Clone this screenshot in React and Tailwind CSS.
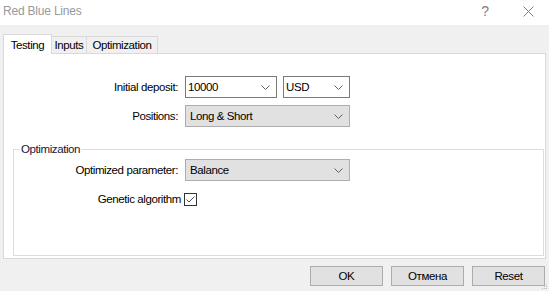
import React from "react";

const font = { fontFamily: '"Liberation Sans", Arial, sans-serif' };

function Chevron() {
  return (
    <svg width="9" height="5" viewBox="0 0 9 5" className="shrink-0">
      <path d="M0.5 0.5 L4.5 4.5 L8.5 0.5" fill="none" stroke="#606060" strokeWidth="1" />
    </svg>
  );
}

function EditCombo({ value, w }) {
  return (
    <div className={`${w} h-[22px] bg-white border border-[#7a7a7a] flex items-center justify-between pl-[2px] pr-[6px]`}>
      <span className="text-black">{value}</span>
      <Chevron />
    </div>
  );
}

function ListCombo({ value, w }) {
  return (
    <div className={`${w} h-[22px] bg-[#e1e1e1] border border-[#adadad] flex items-center justify-between pl-[4px] pr-[6px]`}>
      <span className="text-black">{value}</span>
      <Chevron />
    </div>
  );
}

function Btn({ children }) {
  return (
    <div className="w-[73px] h-[20px] bg-[#e1e1e1] border border-[#adadad] flex items-center justify-center text-black">
      {children}
    </div>
  );
}

export default function App() {
  return (
    <div
      className="relative w-[549px] h-[291px] bg-[#f0f0f0] flex flex-col overflow-hidden text-[11.5px] leading-[14px] tracking-[-0.4px]"
      style={font}
    >
      {/* title bar */}
      <div className="h-[25px] bg-white flex items-center shrink-0">
        <span className="pl-[3px] text-[12px] tracking-[-0.2px] text-[#999999] -mt-[3px]">Red Blue Lines</span>
        <div className="ml-auto flex items-center -mt-[3px]">
          <span className="text-[14px] text-[#808080] w-[10px] text-center mr-[33px]">?</span>
          <svg width="11" height="11" viewBox="0 0 11 11" className="mr-[15px]">
            <path d="M0.5 0.5 L10.5 10.5 M10.5 0.5 L0.5 10.5" stroke="#808080" strokeWidth="1" />
          </svg>
        </div>
      </div>

      {/* tabs */}
      <div className="flex items-end pl-[3px] pt-[8px] h-[28px] shrink-0">
        <div className="relative z-10 w-[49px] h-[20px] -mb-px bg-white border border-[#d9d9d9] border-b-0 flex justify-center items-start pt-[3px] text-black">
          Testing
        </div>
        <div className="w-[35px] h-[17px] bg-[#f0f0f0] border border-[#d9d9d9] border-l-0 border-b-0 flex justify-center items-center text-black">
          Inputs
        </div>
        <div className="w-[71px] h-[17px] bg-[#f0f0f0] border border-[#d9d9d9] border-l-0 border-b-0 flex justify-center items-center text-black">
          Optimization
        </div>
      </div>

      {/* panel */}
      <div className="mx-[3px] h-[206px] shrink-0 bg-white border border-[#d9d9d9] flex flex-col">
        <div className="flex items-center mt-[22px]">
          <div className="w-[181px] pr-[7px] text-right text-black">Initial deposit:</div>
          <EditCombo value="10000" w="w-[92px]" />
          <div className="w-[6px]" />
          <EditCombo value="USD" w="w-[67px]" />
        </div>
        <div className="flex items-center mt-[7px]">
          <div className="w-[181px] pr-[7px] text-right text-black">Positions:</div>
          <ListCombo value="Long & Short" w="w-[165px]" />
        </div>

        <fieldset className="ml-[9px] mr-[1px] mt-[15px] h-[114px] border border-[#dcdcdc] flex flex-col">
          <legend className="ml-[6px] px-[1px] text-[#14143c]">Optimization</legend>
          <div className="flex items-center mt-[3px]">
            <div className="w-[171px] pr-[7px] text-right text-black">Optimized parameter:</div>
            <ListCombo value="Balance" w="w-[165px]" />
          </div>
          <div className="flex items-center mt-[11px]">
            <div className="w-[170px] pr-[3px] text-right text-black">Genetic algorithm</div>
            <div className="w-[13px] h-[13px] border border-[#333333] bg-white flex items-center justify-center">
              <svg width="11" height="11" viewBox="0 0 11 11">
                <path d="M1.5 5.5 L4 8 L9.5 2.5" fill="none" stroke="#505050" strokeWidth="1" />
              </svg>
            </div>
          </div>
        </fieldset>
      </div>

      {/* buttons */}
      <div className="flex justify-end gap-[8px] pr-[4px] mt-[7px]">
        <Btn>OK</Btn>
        <Btn>Отмена</Btn>
        <Btn>Reset</Btn>
      </div>

      {/* resize grip */}
      <svg width="6" height="6" viewBox="0 0 6 6" className="absolute right-[1px] bottom-[1px]">
        <rect x="4" y="0" width="1" height="1" fill="#b8b8b8" />
        <rect x="2" y="2" width="1" height="1" fill="#b8b8b8" />
        <rect x="4" y="2" width="1" height="1" fill="#b8b8b8" />
        <rect x="0" y="4" width="1" height="1" fill="#b8b8b8" />
        <rect x="2" y="4" width="1" height="1" fill="#b8b8b8" />
        <rect x="4" y="4" width="1" height="1" fill="#b8b8b8" />
      </svg>
    </div>
  );
}
